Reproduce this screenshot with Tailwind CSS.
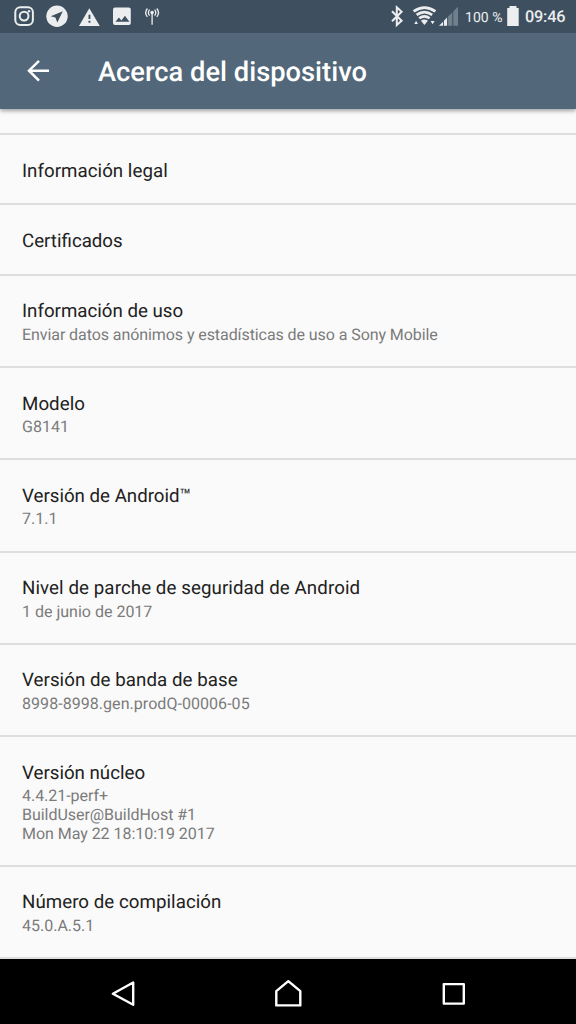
<!DOCTYPE html>
<html lang="es">
<head>
<meta charset="utf-8">
<title>Acerca del dispositivo</title>
<script src="https://cdn.jsdelivr.net/npm/@tailwindcss/browser@4"></script>
</head>
<body class="w-[576px] h-[1024px] overflow-hidden bg-[#fafafa] font-[Roboto,sans-serif] flex flex-col [text-rendering:geometricPrecision]">
<header class="shrink-0 relative z-10 shadow-[0_2px_4px_rgba(0,0,0,0.35)]">
  <div class="h-[33px] bg-[#3e505f] flex items-center text-[#ebedee]">
    <svg class="w-[576px] h-[33px] shrink-0" viewBox="0 0 576 33" fill="#ebedee">
      <g fill="none" stroke="#ebedee" stroke-width="2"><rect x="15.3" y="7.3" width="17.6" height="17.6" rx="5"/><circle cx="24.1" cy="16.1" r="4.4"/></g><circle cx="29" cy="11.2" r="1.2"/>
      <circle cx="57" cy="16.2" r="10.7"/><path d="M62.8 11.2 50.8 16.2l4.6 1.4 1.9 5z" fill="#3e505f"/>
      <path d="M89.3 8.3 99.8 26H79z"/><path d="M88.5 14.7h1.9v4.2h-1.9zM88.5 20.8h1.9v2h-1.9z" fill="#3e505f"/>
      <rect x="113" y="7.6" width="17.8" height="17.3" rx="2"/><path d="m115.5 21.8 3.4-4.4 2.5 3 3.5-4.6 4.5 6z" fill="#3e505f"/>
      <g fill="none" stroke="#ebedee" stroke-width="1.3"><path d="M149.6 9.7q-2.4 3 0 6M147.4 8.5q-3.4 4.2 0 8.4M154.6 9.7q2.4 3 0 6M156.8 8.5q3.4 4.2 0 8.4M152.1 13v11.8"/></g><circle cx="152.1" cy="12.6" r="1.8"/>
      <path d="m392 11.2 9.6 9.5-4.8 4.4V7.2l4.8 4.5-9.6 9.5" fill="none" stroke="#ebedee" stroke-width="2"/>
      <g fill="none" stroke="#ebedee" stroke-width="2.7"><path d="M413.6 11.4q10.9-7.6 21.8 0M416.6 14.9q7.8-5.6 15.6 0M419.2 18.3q5.2-4 10.4 0"/></g><path d="M420.9 20.8q3.5-2.5 7 0l-3.5 4.3zM414.3 24l1.8-3.2 1.8 3.2zM430.6 20.9h4l-2 3.4z"/>
      <g><path d="M439 25.7 443 21.8v3.9zM443.9 20.8l3.2-3.2v8.1h-3.2z"/><path d="m448.1 16.6 4.2-4.2v13.3h-4.2zM453.3 11.4l4.7-4.7v19h-4.7z" fill="#71808c"/></g>
      <text x="465" y="21.5" font-size="14" textLength="37.5">100 %</text>
      <path d="M507.2 8h2.3V6h7v2h2.2v18h-11.5z"/>
      <text x="525" y="22.2" font-size="16.3" font-weight="500" textLength="40.5">09:46</text>
    </svg>
  </div>
  <div class="h-[76px] bg-[#52687a] flex items-center pl-[27px]">
    <svg class="w-[22px] h-[22px]" viewBox="0 0 22 22" fill="none" stroke="#fff" stroke-width="2.5"><path d="M22 10.7H2M12 .9 2 10.7l10 9.9"/></svg>
    <h1 class="ml-[49px] text-[27.3px] leading-[30px] font-medium text-white whitespace-nowrap mt-[1px]">Acerca del dispositivo</h1>
  </div>
</header>
<main class="grow pt-[24px] text-[16px] leading-[18.7px] text-[#7b7b7b] whitespace-nowrap overflow-hidden">
  <section class="h-[70.4px] border-t-2 border-[#dedede] pl-[22px] pt-[22.8px]"><h2 class="text-[18.7px] leading-[26.5px] tracking-[0.04px] text-[#212121]">Información legal</h2></section>
  <section class="h-[70.3px] border-t-2 border-[#dedede] pl-[22px] pt-[23px]"><h2 class="text-[18.7px] leading-[26.5px] text-[#212121]">Certificados</h2></section>
  <section class="h-[92.3px] border-t-2 border-[#dedede] pl-[22px] pt-[22.6px]"><h2 class="text-[18.7px] leading-[26.5px] mb-[1px] text-[#212121]">Información de uso</h2><p class="tracking-[-0.078px]">Enviar datos anónimos y estadísticas de uso a Sony Mobile</p></section>
  <section class="h-[92.3px] border-t-2 border-[#dedede] pl-[22px] pt-[22.6px]"><h2 class="text-[18.7px] leading-[26.5px] mb-[1px] tracking-[0.06px] text-[#212121]">Modelo</h2><p>G8141</p></section>
  <section class="h-[92.3px] border-t-2 border-[#dedede] pl-[22px] pt-[22.6px]"><h2 class="text-[18.7px] leading-[26.5px] mb-[1px] text-[#212121]">Versión de Android™</h2><p>7.1.1</p></section>
  <section class="h-[92.3px] border-t-2 border-[#dedede] pl-[22px] pt-[22.6px]"><h2 class="text-[18.7px] leading-[26.5px] mb-[1px] tracking-[0.09px] text-[#212121]">Nivel de parche de seguridad de Android</h2><p>1 de junio de 2017</p></section>
  <section class="h-[92.3px] border-t-2 border-[#dedede] pl-[22px] pt-[22.6px]"><h2 class="text-[18.7px] leading-[26.5px] mb-[1px] tracking-[0.06px] text-[#212121]">Versión de banda de base</h2><p class="tracking-[0.05px]">8998-8998.gen.prodQ-00006-05</p></section>
  <section class="h-[129.6px] border-t-2 border-[#dedede] pl-[22px] pt-[22.6px]"><h2 class="text-[18.7px] leading-[26.5px] mb-[1px] text-[#212121]">Versión núcleo</h2><p class="tracking-[-0.04px]">4.4.21-perf+<br>BuildUser@BuildHost #1<br>Mon May 22 18:10:19 2017</p></section>
  <section class="h-[94px] border-y-2 border-[#dedede] pl-[22px] pt-[22.6px]"><h2 class="text-[18.7px] leading-[26.5px] mb-[1px] tracking-[0.05px] text-[#212121]">Número de compilación</h2><p>45.0.A.5.1</p></section>
</main>
<nav class="h-[65px] shrink-0 bg-black relative z-10">
  <svg class="w-[576px] h-[65px]" viewBox="0 959 576 65" fill="none" stroke="#fff" stroke-width="2.4" stroke-linejoin="round"><path d="M133.2 982.5v22.3L112.9 993.8zM276.3 1005.4V991.2l12-10 12 10v14.2z"/><rect x="443.8" y="984.1" width="20" height="19.5"/></svg>
</nav>
</body>
</html>
